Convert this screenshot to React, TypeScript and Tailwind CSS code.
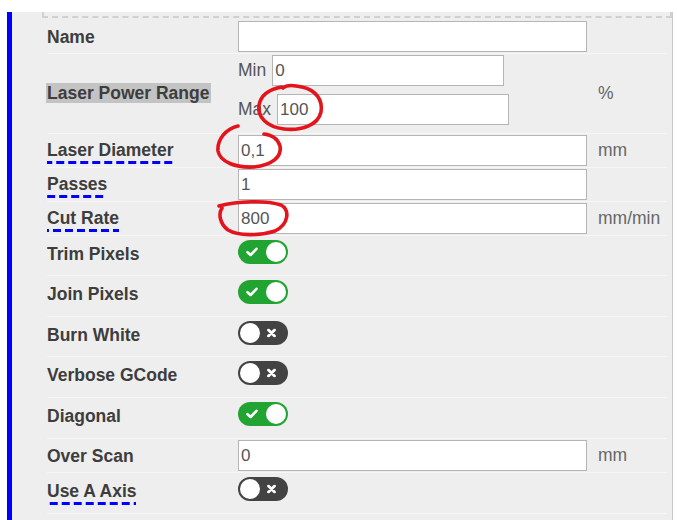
import React from 'react';

type Field =
  | { kind: 'text'; label: string; value: string; unit?: string; hint?: boolean; h: number }
  | { kind: 'toggle'; label: string; on: boolean; hint?: boolean; h: number };

const fields: Field[] = [
  { kind: 'text', label: 'Laser Diameter', value: '0,1', unit: 'mm', hint: true, h: 34 },
  { kind: 'text', label: 'Passes', value: '1', hint: true, h: 34 },
  { kind: 'text', label: 'Cut Rate', value: '800', unit: 'mm/min', hint: true, h: 34 },
  { kind: 'toggle', label: 'Trim Pixels', on: true, h: 40 },
  { kind: 'toggle', label: 'Join Pixels', on: true, h: 41 },
  { kind: 'toggle', label: 'Burn White', on: false, h: 40 },
  { kind: 'toggle', label: 'Verbose GCode', on: false, h: 41 },
  { kind: 'toggle', label: 'Diagonal', on: true, h: 41 },
  { kind: 'text', label: 'Over Scan', value: '0', unit: 'mm', h: 34 },
  { kind: 'toggle', label: 'Use A Axis', on: false, hint: true, h: 41 },
];

const font = { fontFamily: '"Liberation Sans", Arial, sans-serif' };

function TextInput({ value, className = 'w-[349px]' }: { value: string; className?: string }) {
  return (
    <input
      readOnly
      value={value}
      className={`h-[31px] border border-[#b5b5b5] bg-white px-[2px] text-[17px] text-[#555] outline-none ${className}`}
      style={font}
    />
  );
}

function Toggle({ on }: { on: boolean }) {
  return (
    <div className={`relative h-6 w-[50px] rounded-full ${on ? 'bg-[#22a432]' : 'bg-[#434343]'}`}>
      {on ? (
        <svg className="absolute left-[8px] top-1/2 -translate-y-1/2" width="12" height="10" viewBox="0 0 12 10">
          <path d="M1.5 5.2 L4.6 8 L10.5 1.8" fill="none" stroke="white" strokeWidth="2.6" strokeLinecap="round" strokeLinejoin="round" />
        </svg>
      ) : (
        <svg className="absolute left-[29px] top-1/2 -translate-y-1/2" width="9" height="9" viewBox="0 0 9 9">
          <path d="M1.5 1.5 L7.5 7.5 M7.5 1.5 L1.5 7.5" fill="none" stroke="white" strokeWidth="2.8" strokeLinecap="round" />
        </svg>
      )}
      <div
        className={`absolute top-[2px] h-5 w-5 rounded-full bg-white ${on ? 'right-[2px]' : 'left-[2px]'}`}
      />
    </div>
  );
}

function Label({ text, hint }: { text: string; hint?: boolean }) {
  if (!hint) return <span>{text}</span>;
  return (
    <span className="inline-block bg-[linear-gradient(to_right,#0000ff_64%,transparent_64%)] bg-[length:12px_3px] bg-bottom bg-repeat-x pb-[4px] leading-[20px]">
      {text}
    </span>
  );
}

export default function App() {
  return (
    <div className="relative h-[520px] w-[677px] overflow-hidden bg-white" style={font}>
      <div className="flex h-full pl-[7px] pt-[12px] pr-[4px]">
        <div className="w-[5px] shrink-0 bg-[#0000ff]" />
        <div className="flex-1 border-r border-[#c9c9c9] bg-[#eeeeee]">
          {/* tail of the section box above */}
          <div className="ml-[30px] h-[6px] border-x-2 border-b-2 border-dashed border-[#d0d0d0]" />

          <div className="ml-[35px] mr-[5px] text-[17.5px]">
            <div className="flex h-[36px] border-b border-[#f6f6f6] pt-[3px]">
              <div className="w-[191px] pt-[6px] font-bold leading-[20px] text-[#3d3d3d]">Name</div>
              <TextInput value="" />
            </div>

            <div className="flex h-[80px] items-center border-b border-[#f6f6f6]">
              <div className="w-[191px] font-bold text-[#3d3d3d]">
                <span className="-ml-px bg-[#c3c3c3] pl-px pr-[2px] leading-[20px]">Laser Power Range</span>
              </div>
              <div className="flex w-[349px] flex-col gap-[8px] pb-[7px] text-[#555]">
                <div className="flex items-center gap-[6px]">
                  <span>Min</span>
                  <TextInput value="0" className="w-[232px]" />
                </div>
                <div className="flex items-center gap-[6px]">
                  <span>Max</span>
                  <TextInput value="100" className="w-[232px]" />
                </div>
              </div>
              <div className="pl-[11px] text-[#666]">%</div>
            </div>

            {fields.map((f) => (
              <div
                key={f.label}
                className={`flex border-b border-[#f6f6f6] ${f.kind === 'toggle' ? 'items-start pt-[4px]' : 'items-center'}`}
                style={{ height: f.h }}
              >
                <div
                  className={`w-[191px] font-bold leading-[24px] text-[#3d3d3d] ${f.kind === 'toggle' ? 'pt-[2px]' : ''}`}
                >
                  <Label text={f.label} hint={f.hint} />
                </div>
                {f.kind === 'text' ? (
                  <>
                    <TextInput value={f.value} />
                    {f.unit && <div className="pl-[11px] text-[#666]">{f.unit}</div>}
                  </>
                ) : (
                  <Toggle on={f.on} />
                )}
              </div>
            ))}
          </div>
        </div>
      </div>

      {/* red pen marks */}
      <svg className="pointer-events-none absolute inset-0" width="677" height="520" viewBox="0 0 677 520">
        <g fill="none" stroke="#e3141b" strokeWidth="3.6" strokeLinecap="round" strokeLinejoin="round">
          <path d="M283 88 C 286 85, 294 85, 302 87 C 316 90, 323 100, 321 112 C 318 125, 302 131, 284 129 C 267 127, 257 117, 259 105 C 261 95, 270 89, 282 87" />
          <path d="M238 126 C 226 129, 217 139, 218 151 C 220 162, 236 168, 254 167 C 272 165, 282 157, 280 146 C 278 139, 272 135, 264 134" />
          <path d="M219 206 C 238 201, 266 200, 281 205 C 290 210, 289 224, 275 231 C 260 236, 238 236, 228 230 C 220 224, 218 214, 222 208" />
        </g>
      </svg>
    </div>
  );
}
